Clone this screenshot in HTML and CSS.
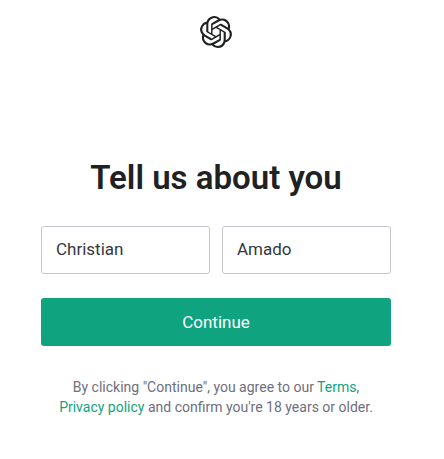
FILE: index.html
```html
<!DOCTYPE html>
<html lang="en">
<head>
<meta charset="utf-8">
<meta name="viewport" content="width=device-width, initial-scale=1">
<title>Tell us about you</title>
<link rel="stylesheet" href="styles.css">
</head>
<body>
<header class="header">
<svg class="logo" viewBox="0 0 24 24" role="img" aria-label="OpenAI"><path d="M22.2819 9.8211a5.9847 5.9847 0 0 0-.5157-4.9108 6.0462 6.0462 0 0 0-6.5098-2.9A6.0651 6.0651 0 0 0 4.9807 4.1818a5.9847 5.9847 0 0 0-3.9977 2.9 6.0462 6.0462 0 0 0 .7427 7.0966 5.98 5.98 0 0 0 .511 4.9107 6.051 6.051 0 0 0 6.5146 2.9001A5.9847 5.9847 0 0 0 13.2599 24a6.0557 6.0557 0 0 0 5.7718-4.2058 5.9894 5.9894 0 0 0 3.9977-2.9001 6.0557 6.0557 0 0 0-.7475-7.0729zm-9.022 12.6081a4.4755 4.4755 0 0 1-2.8764-1.0408l.1419-.0804 4.7783-2.7582a.7948.7948 0 0 0 .3927-.6813v-6.7369l2.02 1.1686a.071.071 0 0 1 .038.052v5.5826a4.504 4.504 0 0 1-4.4945 4.4944zm-9.6607-4.1254a4.4708 4.4708 0 0 1-.5346-3.0137l.142.0852 4.783 2.7582a.7712.7712 0 0 0 .7806 0l5.8428-3.3685v2.3324a.0804.0804 0 0 1-.0332.0615L9.74 19.9502a4.4992 4.4992 0 0 1-6.1408-1.6464zM2.3408 7.8956a4.485 4.485 0 0 1 2.3655-1.9728V11.6a.7664.7664 0 0 0 .3879.6765l5.8144 3.3543-2.0201 1.1685a.0757.0757 0 0 1-.071 0l-4.8303-2.7865A4.504 4.504 0 0 1 2.3408 7.872zm16.5963 3.8558L13.1038 8.364 15.1192 7.2a.0757.0757 0 0 1 .071 0l4.8303 2.7913a4.4944 4.4944 0 0 1-.6765 8.1042v-5.6772a.79.79 0 0 0-.407-.667zm2.0107-3.0231l-.142-.0852-4.7735-2.7818a.7759.7759 0 0 0-.7854 0L9.409 9.2297V6.8974a.0662.0662 0 0 1 .0284-.0615l4.8303-2.7866a4.4992 4.4992 0 0 1 6.6802 4.66zM8.3065 12.863l-2.02-1.1638a.0804.0804 0 0 1-.038-.0567V6.0742a4.4992 4.4992 0 0 1 7.3757-3.4537l-.142.0805L8.704 5.459a.7948.7948 0 0 0-.3927.6813zm1.0976-2.3654l2.602-1.4998 2.6069 1.4998v2.9994l-2.5974 1.4997-2.6067-1.4997Z"/></svg>
</header>
<main class="content">
<h1 class="title">Tell us about you</h1>
<form class="form">
<div class="names">
<input class="field" type="text" aria-label="First name" value="Christian">
<input class="field" type="text" aria-label="Last name" value="Amado">
</div>
<button class="continue" type="submit">Continue</button>
</form>
<p class="terms">By clicking "Continue", you agree to our <a href="#">Terms</a>, <br><a href="#">Privacy policy</a> and confirm you're 18 years or older.</p>
</main>
</body>
</html>
```
FILE: styles.css
```css
* { box-sizing: border-box; }
body {
  margin: 0;
  padding: 16px 53px 40px 41px;
  background: #fff;
  color: #202123;
  font-family: Roboto, "Liberation Sans", sans-serif;
}
.header { display: flex; justify-content: center; }
.logo { width: 32px; height: 32px; fill: #202123; }
.content { max-width: 400px; margin: 110px auto 0; }
.title {
  margin: 0 0 28px;
  font-size: 33px;
  line-height: 40px;
  font-weight: 600;
  text-align: center;
  white-space: nowrap;
}
.form { display: grid; gap: 24px; }
.names { display: grid; grid-template-columns: 1fr 1fr; gap: 12px; }
.field {
  width: 100%;
  min-width: 0;
  height: 48px;
  padding: 0 14px 2px;
  border: 1px solid #c5c5d2;
  border-radius: 3px;
  background: #fff;
  color: #353740;
  font: 17px/24px Roboto, "Liberation Sans", sans-serif;
}
.continue {
  height: 48px;
  border: 0;
  border-radius: 3px;
  background: #10a37f;
  color: #fff;
  font: 17px/24px Roboto, "Liberation Sans", sans-serif;
}
.terms {
  margin: 31px -4px 0;
  color: #6e6e80;
  font-size: 14px;
  line-height: 20px;
  text-align: center;
}
.terms a { color: #10a37f; text-decoration: none; }
```
